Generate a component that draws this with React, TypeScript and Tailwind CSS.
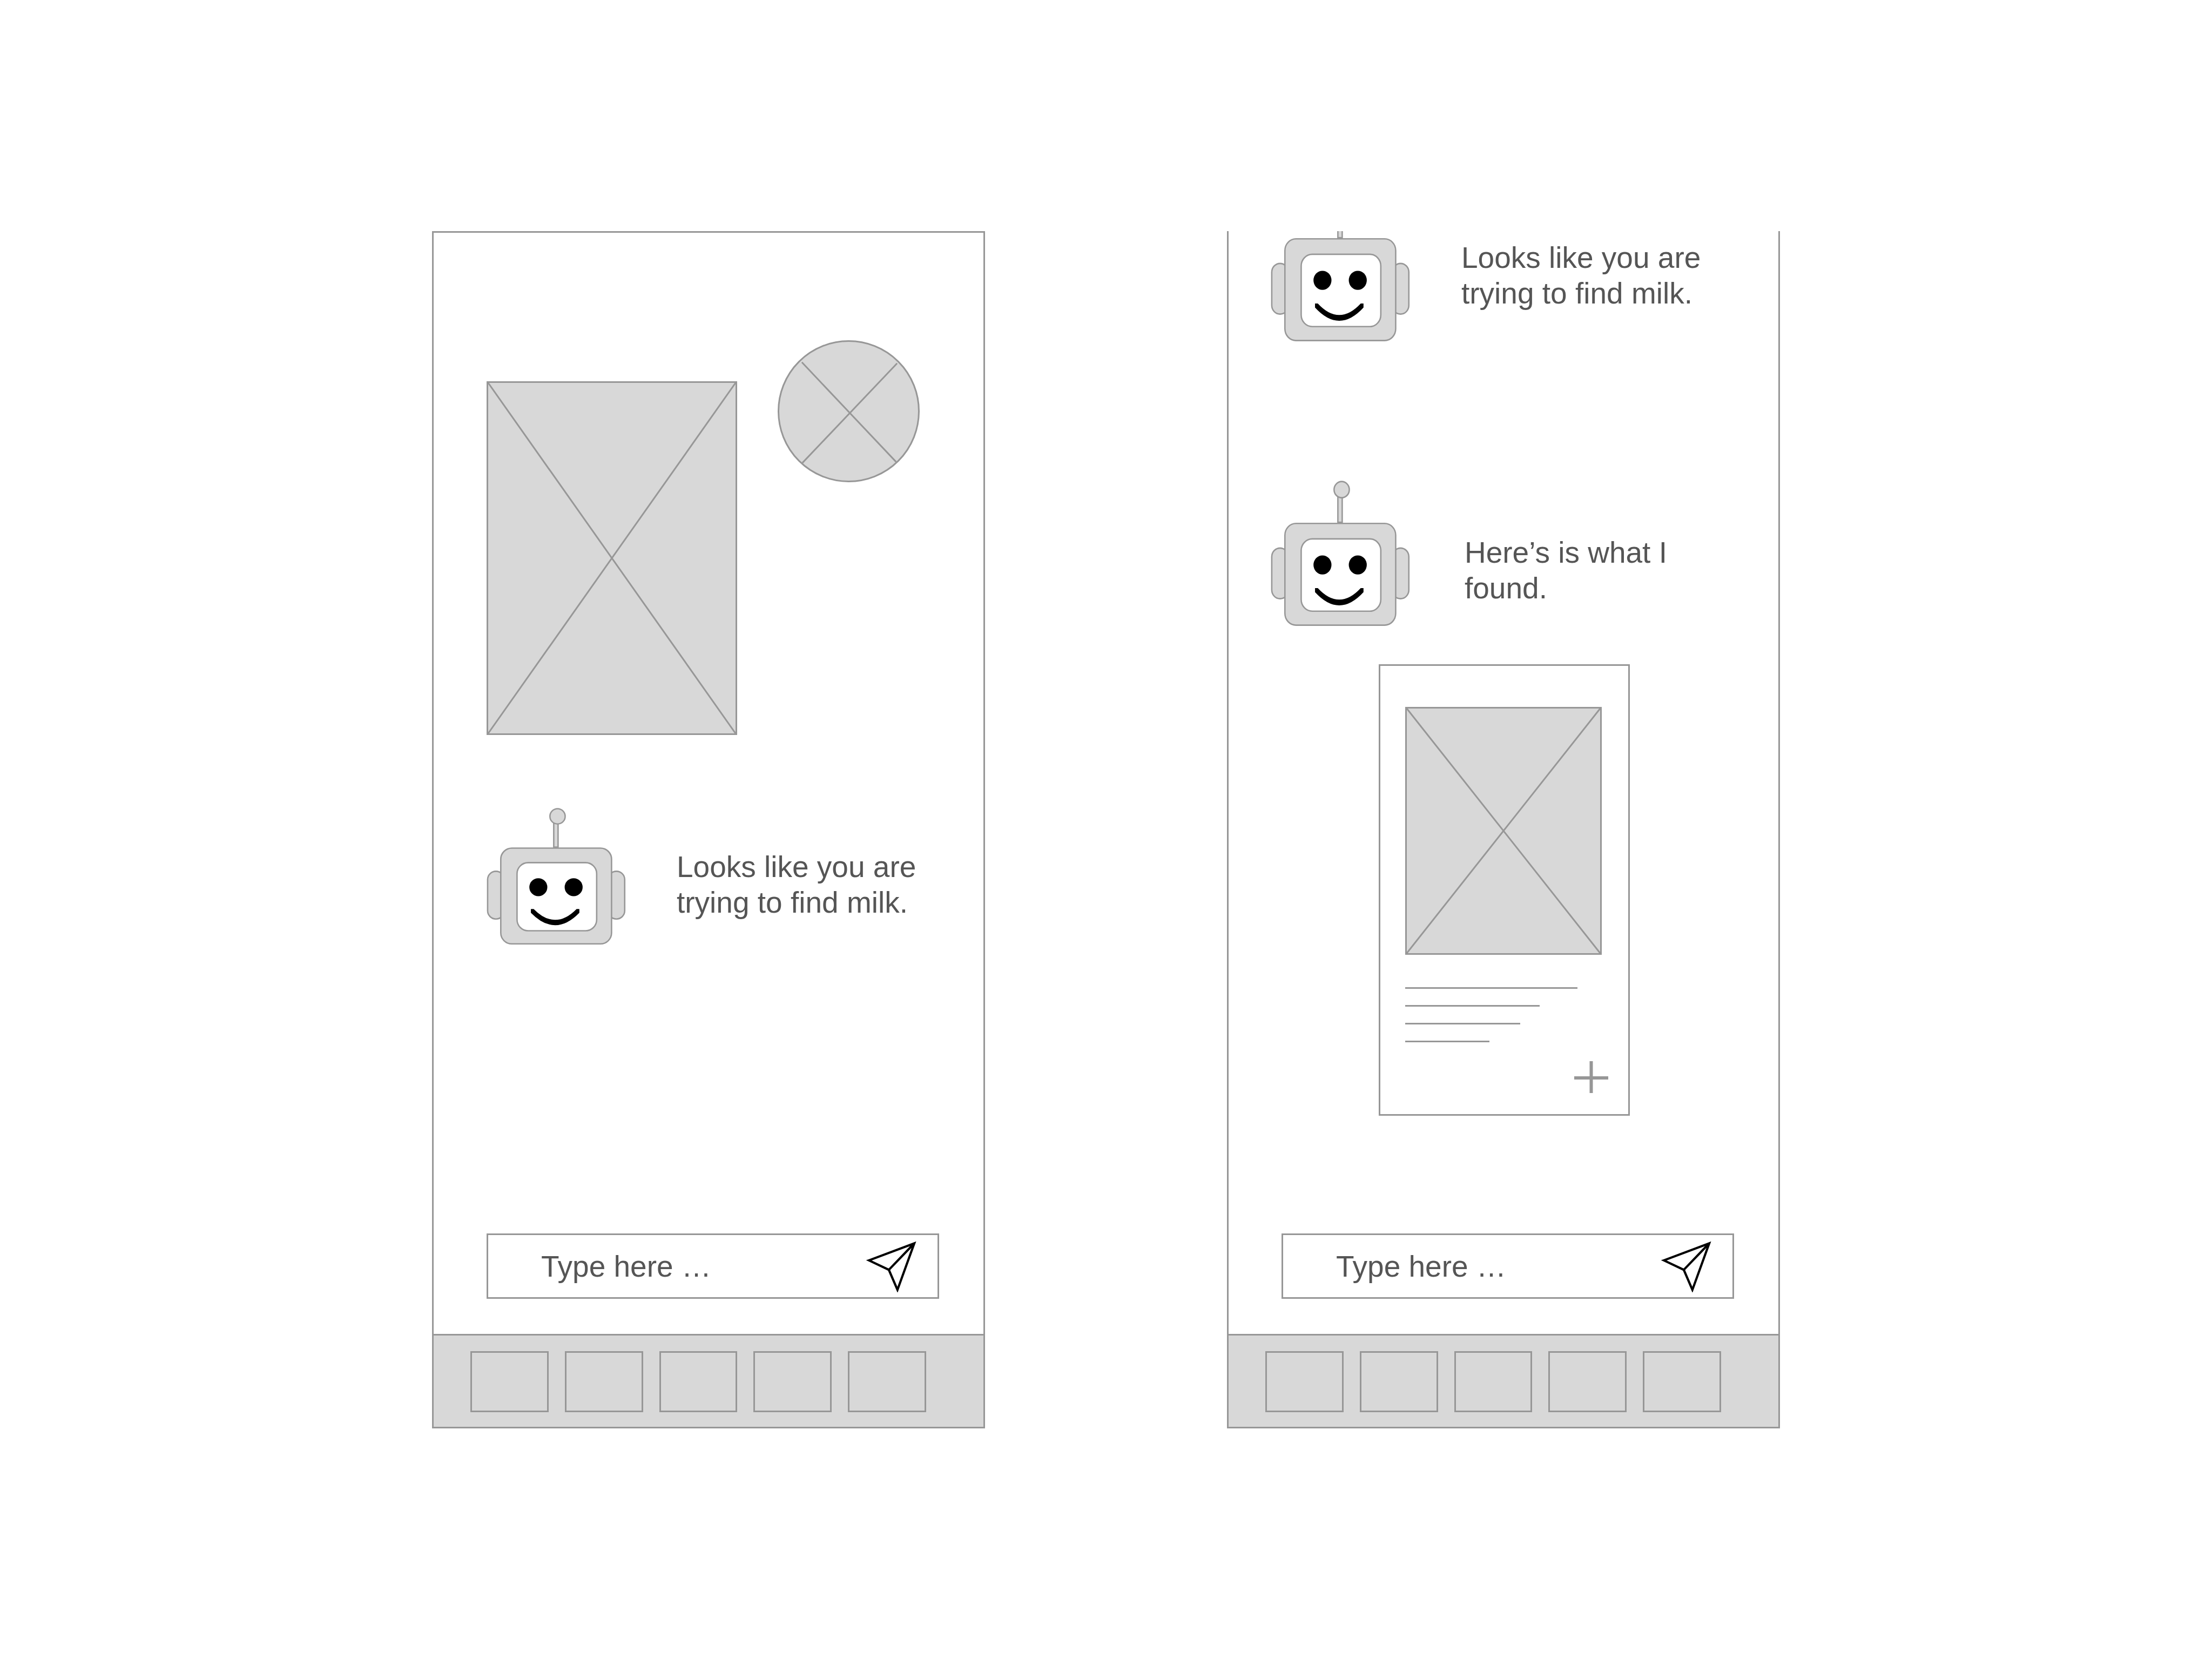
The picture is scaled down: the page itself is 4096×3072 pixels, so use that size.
import React from "react";

const LINE = "#979797";
const FILL = "#d8d8d8";

function Robot({ className }: { className: string }) {
  return (
    <svg viewBox="0 0 404 400" preserveAspectRatio="none" className={className} role="img" aria-label="Robot assistant">
      <g fill={FILL} stroke={LINE} strokeWidth="4">
        <rect x="194" y="44" width="12.5" height="71" />
        <circle cx="205" cy="26" r="22" />
        <rect x="3" y="185" width="48" height="138" rx="24" />
        <rect x="351" y="185" width="48" height="138" rx="24" />
        <rect x="41" y="118" width="320" height="277" rx="32" />
        <rect x="88" y="160" width="230" height="197" rx="32" fill="#fff" />
      </g>
      <circle cx="149.5" cy="231" r="26" />
      <circle cx="251.5" cy="231" r="26" />
      <path d="M128 294 H136 Q198 357 260 294 H268 V305 Q198 377 128 305 Z" />
    </svg>
  );
}

function CrossedBox({ className }: { className: string }) {
  return (
    <div className={className}>
      <svg viewBox="0 0 100 100" preserveAspectRatio="none" className="block h-full w-full" aria-hidden="true">
        <path d="M0 0 L100 100 M100 0 L0 100" stroke={LINE} strokeWidth="3" vectorEffect="non-scaling-stroke" />
      </svg>
    </div>
  );
}

function CrossedCircle() {
  return (
    <svg viewBox="0 0 264 264" className="h-[263px] w-[263px] shrink-0" role="img" aria-label="Avatar placeholder">
      <circle cx="132" cy="132" r="130.5" fill={FILL} stroke={LINE} strokeWidth="3" />
      <path d="M45 41 L220 226 M222 43 L46 228" stroke={LINE} strokeWidth="3" />
    </svg>
  );
}

function Composer() {
  return (
    <form
      className="mr-[82px] mb-[65px] ml-[98px] flex h-[121px] items-center border-[3px] border-[#979797] bg-white"
      onSubmit={(e) => e.preventDefault()}
    >
      <input
        type="text"
        aria-label="Message"
        placeholder="Type here …"
        className="h-full min-w-0 flex-1 pl-[98px] text-[55px] text-[#555] outline-none placeholder:text-[#555] placeholder:opacity-100"
      />
      <button type="submit" aria-label="Send" className="mr-[34px] shrink-0">
        <svg viewBox="0 0 160 150" className="block h-[96px] w-[102px]" fill="none" stroke="#000" strokeWidth="6.5">
          <path d="M14 57.5 L146 8 L97 143 L72 85 Z M72 85 L146 8" />
        </svg>
      </button>
    </form>
  );
}

function TabBar() {
  return (
    <nav
      aria-label="Sections"
      className="grid grid-cols-5 gap-[30px] border-t-[3px] border-[#979797] bg-[#d8d8d8] pt-[29px] pr-[106px] pb-[27px] pl-[68px]"
    >
      {[1, 2, 3, 4, 5].map((n) => (
        <button key={n} type="button" aria-label={`Tab ${n}`} className="h-[113px] border-[3px] border-[#979797]" />
      ))}
    </nav>
  );
}

function BrowseScreen() {
  return (
    <section className="flex min-h-[2217px] flex-col border-[3px] border-[#979797]">
      <div className="flex-1 pt-[199px] pl-[98px]">
        <div className="flex items-start gap-[75px]">
          <CrossedBox className="mt-[76px] h-[655px] w-[464px] border-[3px] border-[#979797] bg-[#d8d8d8]" />
          <CrossedCircle />
        </div>
        <div className="mt-[134px] flex items-start gap-[93px]">
          <Robot className="h-[256px] w-[259px] shrink-0" />
          <p className="mt-[77px] max-w-[450px]">Looks like you are trying to find milk.</p>
        </div>
      </div>
      <Composer />
      <TabBar />
    </section>
  );
}

function ProductCard() {
  return (
    <article className="mt-[69px] ml-[278px] flex w-[465px] flex-col border-[3px] border-[#979797] pt-[76px] pb-[39px] pl-[46px]">
      <CrossedBox className="mr-[49px] h-[459px] border-[3px] border-[#979797] bg-[#d8d8d8]" />
      <div className="mt-[60px] flex flex-col gap-[30px]">
        <div className="h-[3px] w-[319px] bg-[#979797]" />
        <div className="h-[3px] w-[249px] bg-[#979797]" />
        <div className="h-[3px] w-[213px] bg-[#979797]" />
        <div className="h-[3px] w-[156px] bg-[#979797]" />
      </div>
      <button type="button" aria-label="Add" className="mt-[35px] mr-[37px] self-end">
        <svg viewBox="0 0 63 59" className="block h-[59px] w-[63px]" stroke={LINE} strokeWidth="6">
          <path d="M0 31 H63 M31.5 0 V59" />
        </svg>
      </button>
    </article>
  );
}

function ResultScreen() {
  return (
    <section className="flex min-h-[2217px] flex-col overflow-hidden border-[3px] border-t-0 border-[#979797]">
      <div className="-mt-[66px] flex-1">
        <div className="flex items-start gap-[94px] pl-[78px]">
          <Robot className="h-[272px] w-[259px] shrink-0" />
          <p className="mt-[82px] max-w-[450px]">Looks like you are trying to find milk.</p>
        </div>
        <div className="mt-[255px] flex items-start gap-[100px] pl-[78px]">
          <Robot className="h-[272px] w-[259px] shrink-0" />
          <p className="mt-[101px] max-w-[450px]">Here’s is what I found.</p>
        </div>
        <ProductCard />
      </div>
      <Composer />
      <TabBar />
    </section>
  );
}

export default function App() {
  return (
    <main className="grid min-h-screen grid-cols-2 content-start gap-[448px] bg-white px-[800px] pt-[428px] font-['Liberation_Sans',Arial,sans-serif] text-[55px] leading-[66px] text-[#555]">
      <BrowseScreen />
      <ResultScreen />
    </main>
  );
}
